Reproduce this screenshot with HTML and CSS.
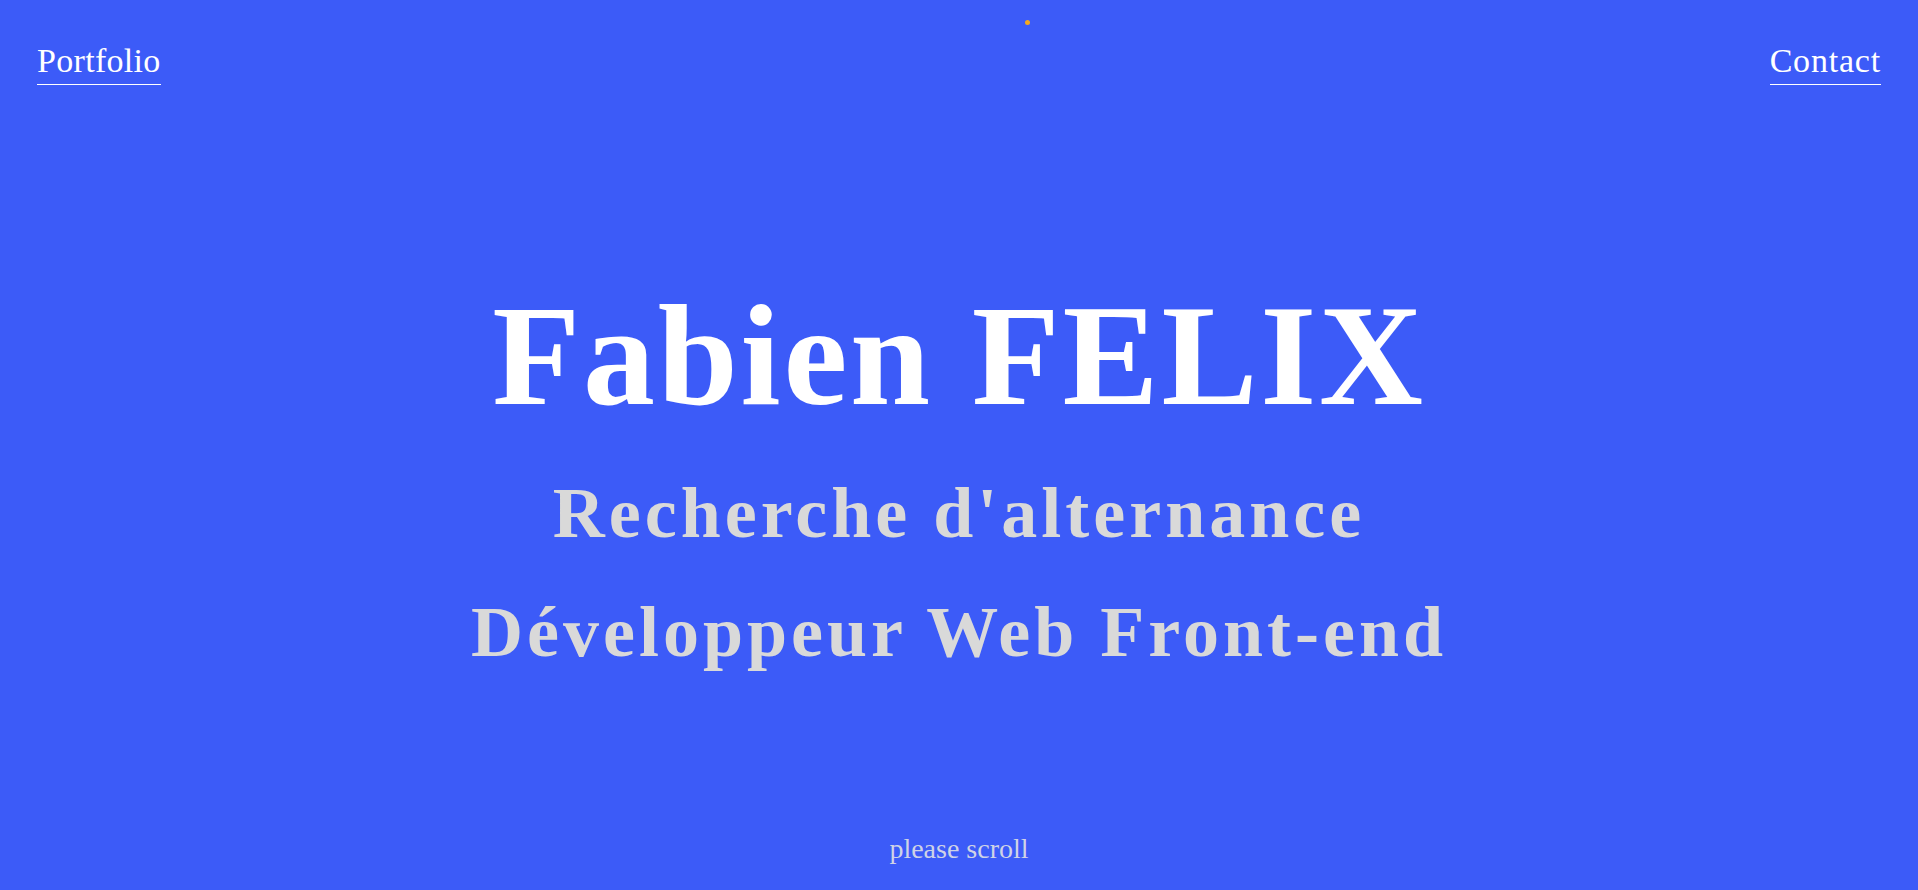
FILE: index.html
```html
<!DOCTYPE html>
<html lang="fr">
<head>
<meta charset="utf-8">
<title>Fabien FELIX</title>
<link rel="stylesheet" href="styles.css">
</head>
<body>
<div class="page">
  <span class="cursor-dot"></span>
  <header class="topbar">
    <a class="nav-link" href="#">Portfolio</a>
    <a class="nav-link" href="#">Contact</a>
  </header>
  <main class="hero">
    <h1 class="hero-title">Fabien FELIX</h1>
    <p class="hero-sub">Recherche d'alternance</p>
    <p class="hero-sub">Développeur Web Front-end</p>
  </main>
  <footer class="scroll-hint">please scroll</footer>
</div>
</body>
</html>
```

FILE: styles.css
```css
html, body {
  margin: 0;
  padding: 0;
}
body {
  background: #3c5bf8;
  font-family: "Liberation Serif", "DejaVu Serif", serif;
  color: #ffffff;
  overflow: hidden;
}
.page {
  position: relative;
  height: 890px;
  display: flex;
  flex-direction: column;
}
.cursor-dot {
  position: absolute;
  left: 1025px;
  top: 20px;
  width: 5px;
  height: 5px;
  border-radius: 50%;
  background: #f6a81c;
}
.topbar {
  display: flex;
  justify-content: space-between;
  align-items: flex-start;
  padding: 41px 37px 0 37px;
}
.nav-link {
  display: inline-block;
  color: #ffffff;
  text-decoration: none;
  font-size: 34px;
  line-height: 40px;
  letter-spacing: 0.3px;
  padding-bottom: 3px;
  border-bottom: 1px solid #ffffff;
}
.nav-link + .nav-link {
  letter-spacing: 0.8px;
}
.hero {
  margin-top: 198px;
  display: flex;
  flex-direction: column;
  align-items: center;
  text-align: center;
}
.hero-title {
  margin: 0;
  font-size: 144px;
  line-height: 146px;
  font-weight: 700;
  letter-spacing: 2.8px;
  color: #ffffff;
}
.hero-sub {
  margin: 0;
  font-size: 72px;
  line-height: 119px;
  font-weight: 700;
  letter-spacing: 4px;
  color: #d9d9d9;
}
.hero-title + .hero-sub {
  margin-top: 25px;
}
.scroll-hint {
  margin-top: 141px;
  text-align: center;
  font-size: 28px;
  line-height: 32px;
  color: #cfd3e6;
}
```
